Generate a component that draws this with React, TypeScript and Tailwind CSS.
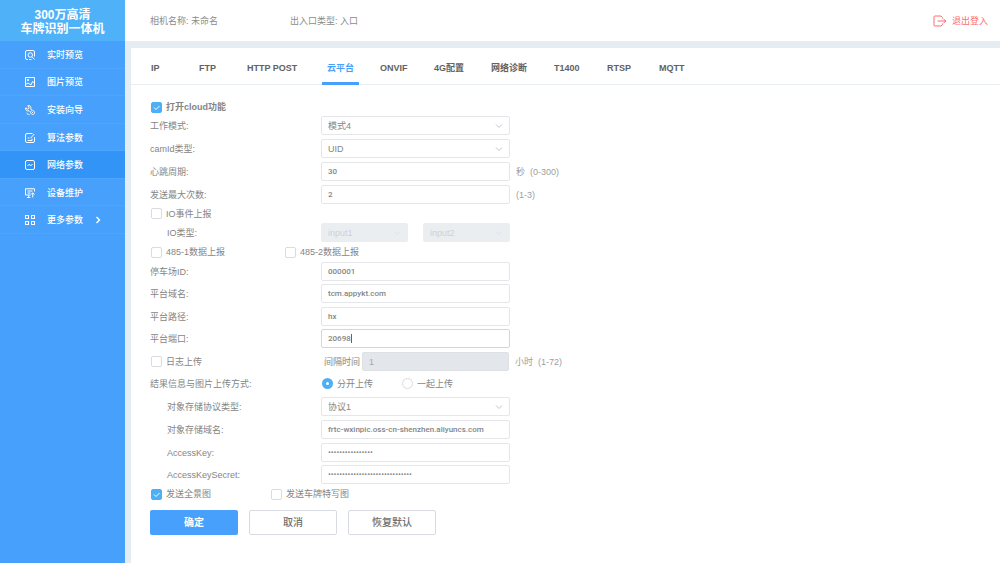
import React, { useState } from "react";

type MenuItem = {
  name: string;
  icon: React.ReactNode;
  more?: boolean;
};

const menu: MenuItem[] = [
  {
    name: "实时预览",
    icon: (
      <>
        <path d="M6 19H4a3 3 0 0 1-3-3V4a3 3 0 0 1 3-3h12a3 3 0 0 1 3 3v9" />
        <circle cx="10.5" cy="10" r="4.500" />
        <path d="M14 13.500l5 5.500M8 19h5" />
      </>
    ),
  },
  {
    name: "图片预览",
    icon: (
      <>
        <path d="M1 1h18v18H1z" />
        <circle cx="6" cy="6" r="1.5" />
        <path d="M1 15l5-3 6 4 3-7 4 3" />
      </>
    ),
  },
  {
    name: "安装向导",
    icon: (
      <>
        <path d="M5.500 1.500L8 4.500 7.500 7.500 4.500 8 1.500 5.500C0 10 4 13 8 11.500l2 2M5.500 1.500C10 0 13 4 11.500 8l2 2" />
        <path d="M12 12.500c2-2.500 4-2.500 5.500-.5 2 2.500 2 4.500.5 6s-4 1-5.500-.5c-2-2-2-3.500-.5-5zM14 14l2 2" />
        <path d="M3 15.500c1 2 3 3.500 6 3.500" />
      </>
    ),
  },
  {
    name: "算法参数",
    icon: (
      <>
        <path d="M19 8v8a3 3 0 0 1-3 3H4a3 3 0 0 1-3-3V4a3 3 0 0 1 3-3h11" />
        <path d="M18.500 2L11 10.500M5.500 10h3M5.500 15H14v-3.500" />
      </>
    ),
  },
  {
    name: "网络参数",
    icon: (
      <>
        <rect x="1" y="1" width="18" height="18" rx="3" />
        <path d="M5 12l3-3.500 4 3 3-3.500" />
      </>
    ),
  },
  {
    name: "设备维护",
    icon: (
      <>
        <path d="M19 7V1.500H1V14h10M5 6h10M5 10h6M4 19h7M7.500 14v5" />
        <path d="M15.500 19v-9M12 13l3.500-3.500L19 13" />
      </>
    ),
  },
  {
    name: "更多参数",
    more: true,
    icon: (
      <>
        <rect x="1" y="1" width="6" height="6" />
        <rect x="13" y="1" width="6" height="6" />
        <rect x="1" y="13" width="6" height="6" />
        <rect x="13" y="13" width="6" height="6" />
      </>
    ),
  },
];

const tabs = [
  { name: "IP", width: "w-[48px]" },
  { name: "FTP", width: "w-[48px]" },
  { name: "HTTP POST", width: "w-[80px]" },
  { name: "云平台", width: "w-[53px]" },
  { name: "ONVIF", width: "w-[54px]" },
  { name: "4G配置", width: "w-[57px]" },
  { name: "网络诊断", width: "w-[63px]" },
  { name: "T1400", width: "w-[53px]" },
  { name: "RTSP", width: "w-[52px]" },
  { name: "MQTT", width: "w-[53px]" },
];

const Sidebar = () => (
  <aside className="w-[125px] shrink-0 bg-[#46a0fc] text-white">
    <h1 className="h-[41px] pt-2 bg-[#4fb2f9] text-center text-[12px] leading-[14px] font-bold">
      300万高清
      <br />
      车牌识别一体机
    </h1>
    <nav className="flex flex-col h-[193px]">
      {menu.map((item) => (
        <a
          key={item.name}
          href="#"
          className={`flex flex-1 items-center pl-[25px] pt-px border-b border-[#4ea6fc] font-medium ${
            item.name === "网络参数" ? "bg-[#3294f6]" : ""
          }`}
        >
          <svg
            viewBox="0 0 20 20"
            fill="none"
            stroke="currentColor"
            strokeWidth={2}
            className="w-[10px] h-[10px] mr-3"
          >
            {item.icon}
          </svg>
          {item.name}
          {item.more && (
            <svg
              viewBox="0 0 6 8"
              fill="none"
              stroke="currentColor"
              strokeWidth={1.4}
              className="w-[6px] h-[8px] ml-3"
            >
              <path d="M1.500 1l3 3-3 3" />
            </svg>
          )}
        </a>
      ))}
    </nav>
  </aside>
);

type RowProps = {
  label: string;
  id: string;
  indent?: boolean;
  className?: string;
  children: React.ReactNode;
};

const Row = ({ label, id, indent, className = "mb-1", children }: RowProps) => (
  <div className={`flex items-center h-[19px] ${className}`}>
    <label
      htmlFor={id}
      className={`w-[171px] shrink-0 ${indent ? "pl-[17px]" : ""}`}
    >
      {label}
    </label>
    {children}
  </div>
);

type TextProps = {
  id: string;
  value: string;
  type?: string;
  active?: boolean;
};

const TextBox = ({ id, value, type = "text", active }: TextProps) => (
  <input
    id={id}
    type={type}
    defaultValue={value}
    className={`block w-[189px] h-[19px] px-[6px] rounded-[2px] border bg-white outline-none text-[8px] font-['Roboto','Noto_Sans_CJK_SC',sans-serif] font-medium ${
      active ? "border-[#d3d5d9]" : "border-[#e4e6ea]"
    }`}
  />
);

type SelectProps = {
  id: string;
  value: string;
  disabled?: boolean;
  label?: string;
};

const SelectBox = ({ id, value, disabled, label }: SelectProps) => (
  <div className={`relative ${disabled ? "w-[87px]" : "w-[189px]"}`}>
    <select
      id={id}
      disabled={disabled}
      aria-label={label}
      className={`block appearance-none w-full h-[19px] px-[6px] rounded-[2px] border outline-none ${
        disabled
          ? "bg-[#ebeef1] border-[#ebeef1] text-[#cdd1d5] opacity-100"
          : "bg-white border-[#e4e6ea]"
      }`}
    >
      <option>{value}</option>
    </select>
    <svg
      viewBox="0 0 8 6"
      fill="none"
      stroke={disabled ? "#dde1e5" : "#c0c4cc"}
      className="absolute right-[7px] top-[7px] w-[8px] h-[6px] pointer-events-none"
    >
      <path d="M1 1.500l3 3 3-3" />
    </svg>
  </div>
);

type CheckProps = {
  label: string;
  checked?: boolean;
  className?: string;
};

const Check = ({ label, checked, className = "" }: CheckProps) => (
  <label className={`flex items-center ${className}`}>
    <span className="relative ml-[1px] mr-1 w-[11px] h-[11px]">
      <input
        type="checkbox"
        defaultChecked={checked}
        className="peer block appearance-none w-[11px] h-[11px] rounded-[2px] border border-[#d8dbe0] bg-white checked:bg-[#4daff8] checked:border-[#4daff8]"
      />
      <svg
        viewBox="0 0 11 11"
        fill="none"
        stroke="white"
        className="absolute inset-0 hidden peer-checked:block pointer-events-none"
      >
        <path d="M3 5.500l2 2 3.500-3.500" />
      </svg>
    </span>
    {label}
  </label>
);

type RadioProps = {
  label: string;
  checked?: boolean;
  className?: string;
};

const Radio = ({ label, checked, className = "" }: RadioProps) => (
  <label className={`flex items-center ${className}`}>
    <input
      type="radio"
      name="uploadMode"
      defaultChecked={checked}
      className="appearance-none ml-[1px] mr-1 w-[11px] h-[11px] rounded-full border border-[#d8dbe0] bg-white checked:border-4 checked:border-[#4daff8]"
    />
    {label}
  </label>
);

const CloudForm = () => (
  <form
    className="pl-[19px] pt-[13px] text-[#858585]"
    onSubmit={(e) => e.preventDefault()}
  >
    <div className="flex items-center h-[18px]">
      <Check label="打开cloud功能" checked className="font-bold" />
    </div>
    <Row label="工作模式:" id="mode">
      <SelectBox id="mode" value="模式4" />
    </Row>
    <Row label="camId类型:" id="camId">
      <SelectBox id="camId" value="UID" />
    </Row>
    <Row label="心跳周期:" id="heartbeat">
      <TextBox id="heartbeat" value="30" />
      <span className="ml-[6px] text-[#a0a0a0]">秒</span>
      <span className="ml-[5px] text-[#a0a0a0]">(0-300)</span>
    </Row>
    <Row label="发送最大次数:" id="maxSend" className="">
      <TextBox id="maxSend" value="2" />
      <span className="ml-[6px] text-[#a0a0a0]">(1-3)</span>
    </Row>
    <div className="flex items-center h-[19px]">
      <Check label="IO事件上报" />
    </div>
    <Row label="IO类型:" id="ioType" indent className="">
      <SelectBox id="ioType" value="input1" disabled />
      <div className="ml-[15px]">
        <SelectBox id="ioType2" value="input2" label="IO类型 2" disabled />
      </div>
    </Row>
    <div className="flex items-center h-5">
      <Check label="485-1数据上报" className="w-[134px]" />
      <Check label="485-2数据上报" />
    </div>
    <Row label="停车场ID:" id="parkId" className="mb-[3px]">
      <TextBox id="parkId" value="000001" />
    </Row>
    <Row label="平台域名:" id="domain">
      <TextBox id="domain" value="tcm.appykt.com" />
    </Row>
    <Row label="平台路径:" id="path" className="mb-[3px]">
      <TextBox id="path" value="hx" />
    </Row>
    <Row label="平台端口:" id="port">
      <div className="relative">
        <TextBox id="port" value="20698" active />
        <span className="absolute left-[30px] top-[5px] w-px h-[9px] bg-[#666]" />
      </div>
    </Row>
    <div className="flex items-center h-[19px]">
      <Check label="日志上传" className="w-[174px]" />
      <label htmlFor="interval" className="w-[38px]">
        间隔时间
      </label>
      <input
        id="interval"
        defaultValue="1"
        disabled
        className="w-[147px] h-[19px] px-[6px] rounded-[2px] border border-[#dde1e6] bg-[#e3e7eb] text-[#a5a8ab]"
      />
      <span className="ml-[6px] text-[#a0a0a0]">小时</span>
      <span className="ml-[5px] text-[#a0a0a0]">(1-72)</span>
    </div>
    <div
      role="radiogroup"
      aria-labelledby="uploadLabel"
      className="flex items-center h-[26px] pb-px"
    >
      <span id="uploadLabel" className="w-[171px] shrink-0">
        结果信息与图片上传方式:
      </span>
      <Radio label="分开上传" checked className="w-[80px]" />
      <Radio label="一起上传" />
    </div>
    <Row label="对象存储协议类型:" id="ossType" indent>
      <SelectBox id="ossType" value="协议1" />
    </Row>
    <Row label="对象存储域名:" id="ossDomain" indent>
      <TextBox
        id="ossDomain"
        value="frtc-wxinpic.oss-cn-shenzhen.aliyuncs.com"
      />
    </Row>
    <Row label="AccessKey:" id="accessKey" indent className="mb-[3px]">
      <TextBox id="accessKey" type="password" value="0123456789abcdef" />
    </Row>
    <Row label="AccessKeySecret:" id="secret" indent className="">
      <TextBox
        id="secret"
        type="password"
        value="0123456789abcdef0123456789abcd"
      />
    </Row>
    <div className="flex items-center h-5">
      <Check label="发送全景图" checked className="w-[120px]" />
      <Check label="发送车牌特写图" />
    </div>
    <div className="flex gap-[11px] mt-[6px] text-[10px] font-medium">
      <button
        type="submit"
        className="w-[88px] h-[25px] rounded-[2px] bg-[#46a0fc] text-white font-bold"
      >
        确定
      </button>
      <button
        type="button"
        className="w-[88px] h-[25px] rounded-[2px] border border-[#d8dce2] text-[#707070]"
      >
        取消
      </button>
      <button
        type="button"
        className="w-[88px] h-[25px] rounded-[2px] border border-[#d8dce2] text-[#707070]"
      >
        恢复默认
      </button>
    </div>
  </form>
);

const App = () => {
  const [tab, setTab] = useState("云平台");

  return (
    <div className="flex min-h-screen bg-[#e6edf2] font-['Liberation_Sans','Noto_Sans_CJK_SC',sans-serif] text-[9px] leading-[14px]">
      <Sidebar />
      <div className="flex flex-col flex-1 min-w-0">
        <header className="flex items-center h-[41px] pl-[25px] pr-3 bg-white text-[#8c8c8c]">
          <span className="w-[140px]">相机名称: 未命名</span>
          <span>出入口类型: 入口</span>
          <a href="#" className="flex items-center ml-auto text-[#fb6f6f]">
            <svg
              viewBox="0 0 14 12"
              fill="none"
              stroke="currentColor"
              className="w-[14px] h-[12px] mr-[5px]"
            >
              <path d="M9.500 3.500V2.500L8 1H2a1 1 0 0 0-1 1v8a1 1 0 0 0 1 1h6l1.500-1.500v-1" />
              <path d="M4.500 6H12" />
              <path d="M10.500 4L13 6l-2.500 2" />
            </svg>
            退出登入
          </a>
        </header>
        <main className="flex-1 mt-[7px] ml-[6px] bg-white">
          <div className="flex h-[37px] pl-5 border-b border-[#e9eef3]">
            {tabs.map((t) => (
              <div key={t.name} className={t.width}>
                <button
                  onClick={() => setTab(t.name)}
                  className={`h-[37px] px-[5px] pt-[6px] -ml-[5px] border-b-3 font-bold whitespace-nowrap ${
                    tab === t.name
                      ? "border-[#46a0fc] text-[#46a0fc]"
                      : "border-transparent text-[#626262]"
                  }`}
                >
                  {t.name}
                </button>
              </div>
            ))}
          </div>
          <CloudForm />
        </main>
      </div>
    </div>
  );
};

export default App;
